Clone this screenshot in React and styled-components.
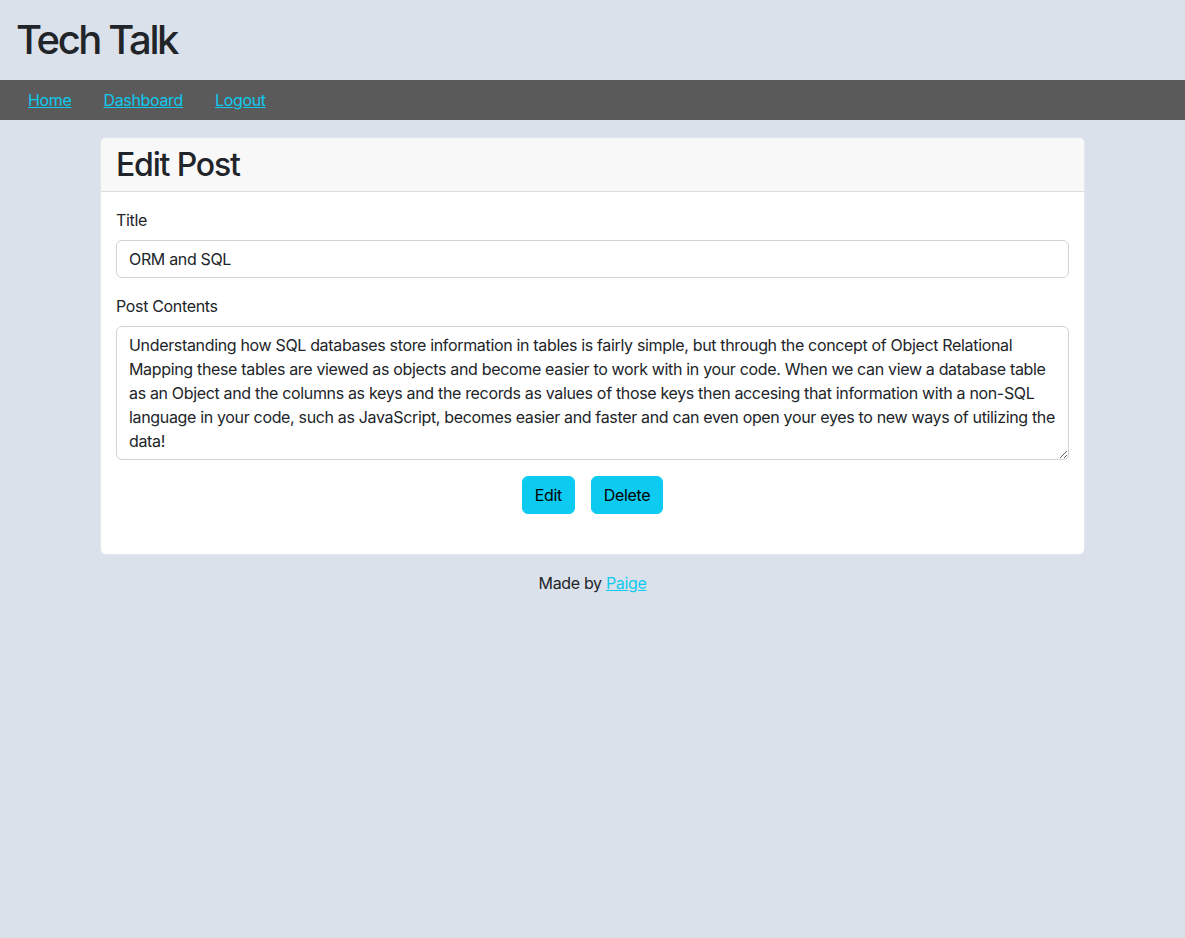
import React from 'react';
import styled, { createGlobalStyle } from 'styled-components';

const GlobalStyle = createGlobalStyle`
  body {
    margin: 0;
    background-color: #dbe1ea;
    color: #212529;
    font-family: Inter, "Noto Sans", "Liberation Sans", sans-serif;
    font-size: 16px;
    line-height: 1.5;
    letter-spacing: -0.021em;
  }
  * {
    box-sizing: border-box;
  }
`;

const Header = styled.header`
  padding: 16px;
`;

const SiteTitle = styled.h1`
  margin: 0;
  font-size: 40px;
  font-weight: 500;
  line-height: 48px;
  letter-spacing: -0.06em;
`;

const Nav = styled.nav`
  display: flex;
  align-items: center;
  gap: 32px;
  height: 40px;
  padding-left: 28px;
  background-color: #5a5a5a;
`;

const Link = styled.a`
  color: #0dcaf0;
  text-decoration: underline;
  cursor: pointer;
`;

const Main = styled.main`
  width: 985px;
  margin: 17px auto 0;
`;

const Card = styled.section`
  background: #fff;
  border: 1px solid #e3e6ea;
  border-radius: 6px;
  overflow: hidden;
`;

const CardHeader = styled.div`
  padding: 8px 15px;
  background-color: #f8f8f8;
  border-bottom: 1px solid #dcdcdc;
`;

const CardTitle = styled.h2`
  margin: 0;
  font-size: 32px;
  font-weight: 500;
  line-height: 37px;
  letter-spacing: -0.037em;
`;

const Form = styled.form`
  display: flex;
  flex-direction: column;
  padding: 16px 15px 40px;
`;

const Field = styled.div`
  display: flex;
  flex-direction: column;
  gap: 8px;
  margin-bottom: 16px;
`;

const Label = styled.label`
  line-height: 24px;
`;

const inputBase = `
  width: 100%;
  padding: 6px 12px;
  font: inherit;
  letter-spacing: inherit;
  line-height: 24px;
  color: #212529;
  background: #fff;
  border: 1px solid #ced4da;
  border-radius: 6px;
  outline: none;
`;

const Input = styled.input`
  ${inputBase}
  height: 38px;
`;

const TextArea = styled.textarea`
  ${inputBase}
  height: 134px;
  resize: vertical;
`;

const Actions = styled.div`
  display: flex;
  justify-content: center;
  gap: 16px;
`;

const Button = styled.button`
  height: 38px;
  padding: 6px 12px;
  font: inherit;
  letter-spacing: inherit;
  line-height: 24px;
  color: #000;
  background-color: #0dcaf0;
  border: 1px solid #0dcaf0;
  border-radius: 6px;
  cursor: pointer;
`;

const Footer = styled.footer`
  margin-top: 16px;
  text-align: center;
  line-height: 24px;
`;

const content =
  'Understanding how SQL databases store information in tables is fairly simple, but through the concept of Object Relational Mapping these tables are viewed as objects and become easier to work with in your code. When we can view a database table as an Object and the columns as keys and the records as values of those keys then accesing that information with a non-SQL language in your code, such as JavaScript, becomes easier and faster and can even open your eyes to new ways of utilizing the data!';

export default function App() {
  return (
    <>
      <GlobalStyle />
      <Header>
        <SiteTitle>Tech Talk</SiteTitle>
      </Header>
      <Nav>
        <Link>Home</Link>
        <Link>Dashboard</Link>
        <Link>Logout</Link>
      </Nav>
      <Main>
        <Card>
          <CardHeader>
            <CardTitle>Edit Post</CardTitle>
          </CardHeader>
          <Form onSubmit={(e) => e.preventDefault()}>
            <Field>
              <Label htmlFor="title">Title</Label>
              <Input id="title" defaultValue="ORM and SQL" />
            </Field>
            <Field>
              <Label htmlFor="contents">Post Contents</Label>
              <TextArea id="contents" defaultValue={content} />
            </Field>
            <Actions>
              <Button type="button">Edit</Button>
              <Button type="button">Delete</Button>
            </Actions>
          </Form>
        </Card>
        <Footer>
          Made by <Link>Paige</Link>
        </Footer>
      </Main>
    </>
  );
}
